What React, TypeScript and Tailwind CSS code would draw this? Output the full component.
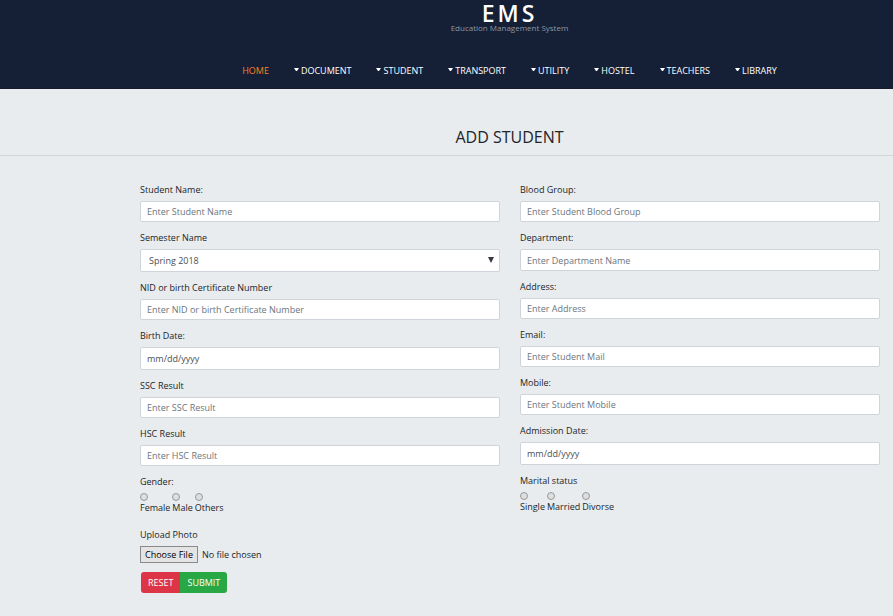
import type { InputHTMLAttributes, ReactNode } from 'react';

const menu = ['DOCUMENT', 'STUDENT', 'TRANSPORT', 'UTILITY', 'HOSTEL', 'TEACHERS', 'LIBRARY'];

const control =
  'block w-full rounded-xs border border-[#ced4da] bg-white px-1.5 text-[9px] leading-3 text-[#495057] placeholder:text-[#6c757d] placeholder:opacity-100';

function Field({ id, label, children }: { id: string; label: string; children: ReactNode }) {
  return (
    <div className="mb-2">
      <label htmlFor={id} className="mb-1 block leading-[15px]">
        {label}
      </label>
      {children}
    </div>
  );
}

function TextField({
  id,
  label,
  height = 'h-[21px]',
  ...rest
}: { id: string; label: string; height?: string } & InputHTMLAttributes<HTMLInputElement>) {
  return (
    <Field id={id} label={label}>
      <input id={id} type="text" className={`${control} ${height}`} {...rest} />
    </Field>
  );
}

function DateField({ id, label }: { id: string; label: string }) {
  return (
    <Field id={id} label={label}>
      <input
        id={id}
        type="date"
        className={`${control} h-[23px] [&::-webkit-calendar-picker-indicator]:hidden [&::-webkit-datetime-edit]:p-0 [&::-webkit-datetime-edit-day-field]:px-0 [&::-webkit-datetime-edit-fields-wrapper]:p-0 [&::-webkit-datetime-edit-month-field]:px-0 [&::-webkit-datetime-edit-year-field]:px-0`}
      />
    </Field>
  );
}

function RadioGroup({ name, legend, options }: { name: string; legend: string; options: string[] }) {
  return (
    <fieldset>
      <legend className="leading-[15px]">{legend}</legend>
      <div className="mt-1 flex gap-0.5">
        {options.map((option) => (
          <label key={option} className="flex flex-col leading-[14px]">
            <input
              type="radio"
              name={name}
              className="size-2 appearance-none rounded-full border border-[#999] bg-[#dedede] checked:bg-[#555]"
            />
            {option}
          </label>
        ))}
      </div>
    </fieldset>
  );
}

export default function App() {
  return (
    <div className="min-h-screen bg-[#e8ecef] font-['Open_Sans','Noto_Sans',sans-serif] text-[9px] text-[#212529]">
      <header className="border-b border-[#1a1a2e] bg-[#151f36] pb-2 pl-[126px] text-white">
        <div className="flex flex-col items-center">
          <p className="text-[23px] leading-[26px] font-semibold tracking-[3px]">EMS</p>
          <p className="text-[8px] leading-1 font-medium text-[#8f97a4]">Education Management System</p>
        </div>
        <nav className="mt-8 flex h-[18px] items-center justify-center gap-[25px] leading-[18px]">
          <a href="#home" className="text-[#f58220]">
            HOME
          </a>
          {menu.map((item) => (
            <a key={item} href={`#${item.toLowerCase()}`} className="flex gap-0.5 font-medium">
              <svg viewBox="0 0 5 3" className="mt-1.5 h-[3px] w-[5px] fill-white">
                <path d="M0 0h5L3 3H2z" />
              </svg>
              {item}
            </a>
          ))}
        </nav>
      </header>

      <h1 className="border-b border-[#d3d7db] pt-[38px] pb-2 pl-[126px] text-center text-[16px] leading-5 font-medium">
        ADD STUDENT
      </h1>

      <form className="grid grid-cols-2 gap-5 pt-[26px] pr-[13px] pl-[140px]">
        <div>
          <TextField id="name" label="Student Name:" placeholder="Enter Student Name" />
          <Field id="semester" label="Semester Name">
            <div className="relative">
              <select id="semester" className={`${control} h-[23px] appearance-none pl-2`}>
                <option>Spring 2018</option>
              </select>
              <svg viewBox="0 0 6 6" className="pointer-events-none absolute top-2 right-1.5 size-1.5 fill-[#343a40]">
                <path d="M0 0h6L3 6z" />
              </svg>
            </div>
          </Field>
          <TextField id="nid" label="NID or birth Certificate Number" placeholder="Enter NID or birth Certificate Number" />
          <DateField id="birth" label="Birth Date:" />
          <TextField id="ssc" label="SSC Result" placeholder="Enter SSC Result" />
          <TextField id="hsc" label="HSC Result" placeholder="Enter HSC Result" />
          <RadioGroup name="gender" legend="Gender:" options={['Female', 'Male', 'Others']} />
          <div className="mt-3">
            <label htmlFor="photo" className="mb-1 block leading-[15px]">
              Upload Photo
            </label>
            <input
              id="photo"
              type="file"
              className="block h-[17px] w-full leading-[15px] file:h-[17px] file:border file:border-[#8a8a8a] file:bg-[#e4e4e4] file:px-1 file:text-[9px] file:leading-[15px] file:text-black"
            />
          </div>
          <div className="mt-[9px] ml-px flex leading-[21px] font-medium text-white">
            <button type="reset" className="rounded-l-[3px] bg-[#dc3545] px-[7px]">
              RESET
            </button>
            <button type="submit" className="rounded-r-[3px] bg-[#28a745] px-[7px]">
              SUBMIT
            </button>
          </div>
        </div>

        <div>
          <TextField id="blood" label="Blood Group:" placeholder="Enter Student Blood Group" />
          <TextField id="department" label="Department:" placeholder="Enter Department Name" height="h-[22px]" />
          <TextField id="address" label="Address:" placeholder="Enter Address" />
          <TextField id="email" label="Email:" placeholder="Enter Student Mail" />
          <TextField id="mobile" label="Mobile:" placeholder="Enter Student Mobile" />
          <DateField id="admission" label="Admission Date:" />
          <RadioGroup name="marital" legend="Marital status" options={['Single', 'Married', 'Divorse']} />
        </div>
      </form>
    </div>
  );
}
